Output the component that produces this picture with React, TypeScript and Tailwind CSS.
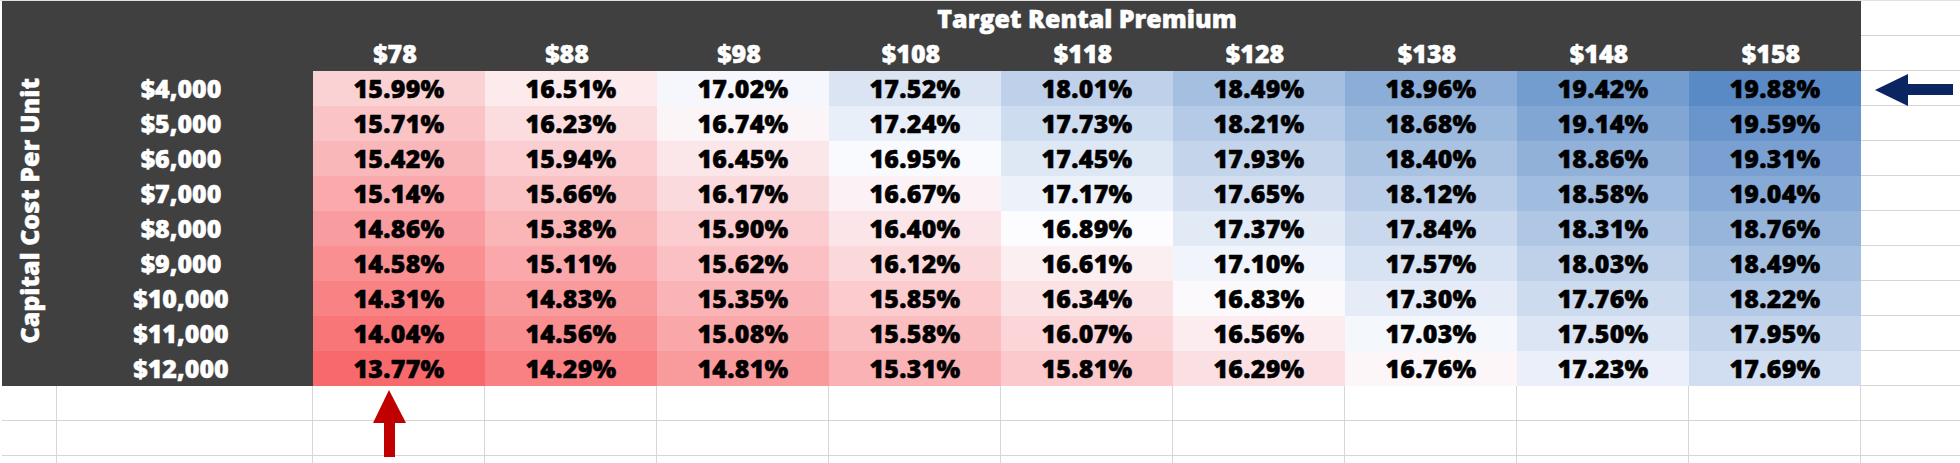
import React from 'react';

const premiums = [78, 88, 98, 108, 118, 128, 138, 148, 158];
const costs = [4000, 5000, 6000, 7000, 8000, 9000, 10000, 11000, 12000];

const values: number[][] = [
    [15.99, 16.51, 17.02, 17.52, 18.01, 18.49, 18.96, 19.42, 19.88],
    [15.71, 16.23, 16.74, 17.24, 17.73, 18.21, 18.68, 19.14, 19.59],
    [15.42, 15.94, 16.45, 16.95, 17.45, 17.93, 18.4, 18.86, 19.31],
    [15.14, 15.66, 16.17, 16.67, 17.17, 17.65, 18.12, 18.58, 19.04],
    [14.86, 15.38, 15.9, 16.4, 16.89, 17.37, 17.84, 18.31, 18.76],
    [14.58, 15.11, 15.62, 16.12, 16.61, 17.1, 17.57, 18.03, 18.49],
    [14.31, 14.83, 15.35, 15.85, 16.34, 16.83, 17.3, 17.76, 18.22],
    [14.04, 14.56, 15.08, 15.58, 16.07, 16.56, 17.03, 17.5, 17.95],
    [13.77, 14.29, 14.81, 15.31, 15.81, 16.29, 16.76, 17.23, 17.69],
];

// excel style 3-colour scale: red at min, white at median, blue at max
const MIN = 13.77;
const MID = 16.89;
const MAX = 19.88;
const RED = [248, 105, 107];
const WHITE = [252, 252, 255];
const BLUE = [90, 138, 198];

const mix = (a: number[], b: number[], t: number) =>
    `rgb(${a.map((v, i) => Math.round(v + (b[i] - v) * t)).join(',')})`;

const scaleColor = (v: number) =>
    v <= MID ? mix(RED, WHITE, (v - MIN) / (MID - MIN)) : mix(WHITE, BLUE, (v - MID) / (MAX - MID));

const money = (n: number) => '$' + n.toLocaleString('en-US');

const App: React.FC = () => {
    return (
        <div className="relative w-[1960px] h-[463px] overflow-hidden bg-white border-t border-[#e2e2e2] font-['Open_Sans',sans-serif] font-extrabold text-[25px] leading-none [-webkit-text-stroke:0.5px_currentColor]">
            <div className="ml-[2px] grid grid-cols-[55px_256px_repeat(9,172px)_1fr] grid-rows-[repeat(14,35px)]">
                {/* dark header block */}
                <div className="col-start-1 col-end-12 row-start-1 row-end-12 bg-[#404040]" />

                <div className="col-start-3 col-end-12 row-start-1 flex items-center justify-center text-white">
                    Target Rental Premium
                </div>

                <div className="col-start-1 row-start-2 row-end-12 flex items-center justify-center text-white">
                    <span className="[writing-mode:vertical-rl] rotate-180 whitespace-nowrap">Capital Cost Per Unit</span>
                </div>

                {premiums.map((p, i) => (
                    <div
                        key={p}
                        className="row-start-2 flex items-center justify-center text-white pr-2"
                        style={{ gridColumnStart: i + 3 }}
                    >
                        ${p}
                    </div>
                ))}

                {costs.map((c, r) => (
                    <React.Fragment key={c}>
                        <div className="col-start-2 flex items-center justify-center text-white pr-2" style={{ gridRowStart: r + 3 }}>
                            {money(c)}
                        </div>
                        {values[r].map((v, i) => (
                            <div
                                key={i}
                                className="flex items-center justify-center text-black tracking-[0.01em]"
                                style={{ gridRowStart: r + 3, gridColumnStart: i + 3, backgroundColor: scaleColor(v) }}
                            >
                                {v.toFixed(2)}%
                            </div>
                        ))}
                    </React.Fragment>
                ))}

                {/* empty sheet cells to the right */}
                {Array.from({ length: 11 }).map((_, r) => (
                    <div key={'r' + r} className="col-start-12 border-b border-[#d6d6d6]" style={{ gridRowStart: r + 1 }} />
                ))}

                {/* empty sheet rows below */}
                {[12, 13, 14].map(row =>
                    Array.from({ length: 12 }).map((_, c) => (
                        <div
                            key={row + '-' + c}
                            className={c < 11 ? 'border-b border-r border-[#d6d6d6]' : 'border-b border-[#d6d6d6]'}
                            style={{ gridRowStart: row, gridColumnStart: c + 1 }}
                        />
                    ))
                )}
            </div>

            {/* navy arrow pointing at the best case */}
            <svg className="absolute left-[1872px] top-[70px]" width="84" height="38" viewBox="0 0 84 38">
                <polygon points="3,19 36,3 36,13 81,13 81,24 36,24 36,35" fill="#0b2563" />
            </svg>

            {/* red arrow pointing at the worst case */}
            <svg className="absolute left-[370px] top-[386px]" width="40" height="72" viewBox="0 0 40 72">
                <polygon points="19,3 36,36 3,36" fill="#c00000" />
                <rect x="14" y="35" width="11" height="35" fill="#c00000" />
            </svg>
        </div>
    );
};

export default App;
